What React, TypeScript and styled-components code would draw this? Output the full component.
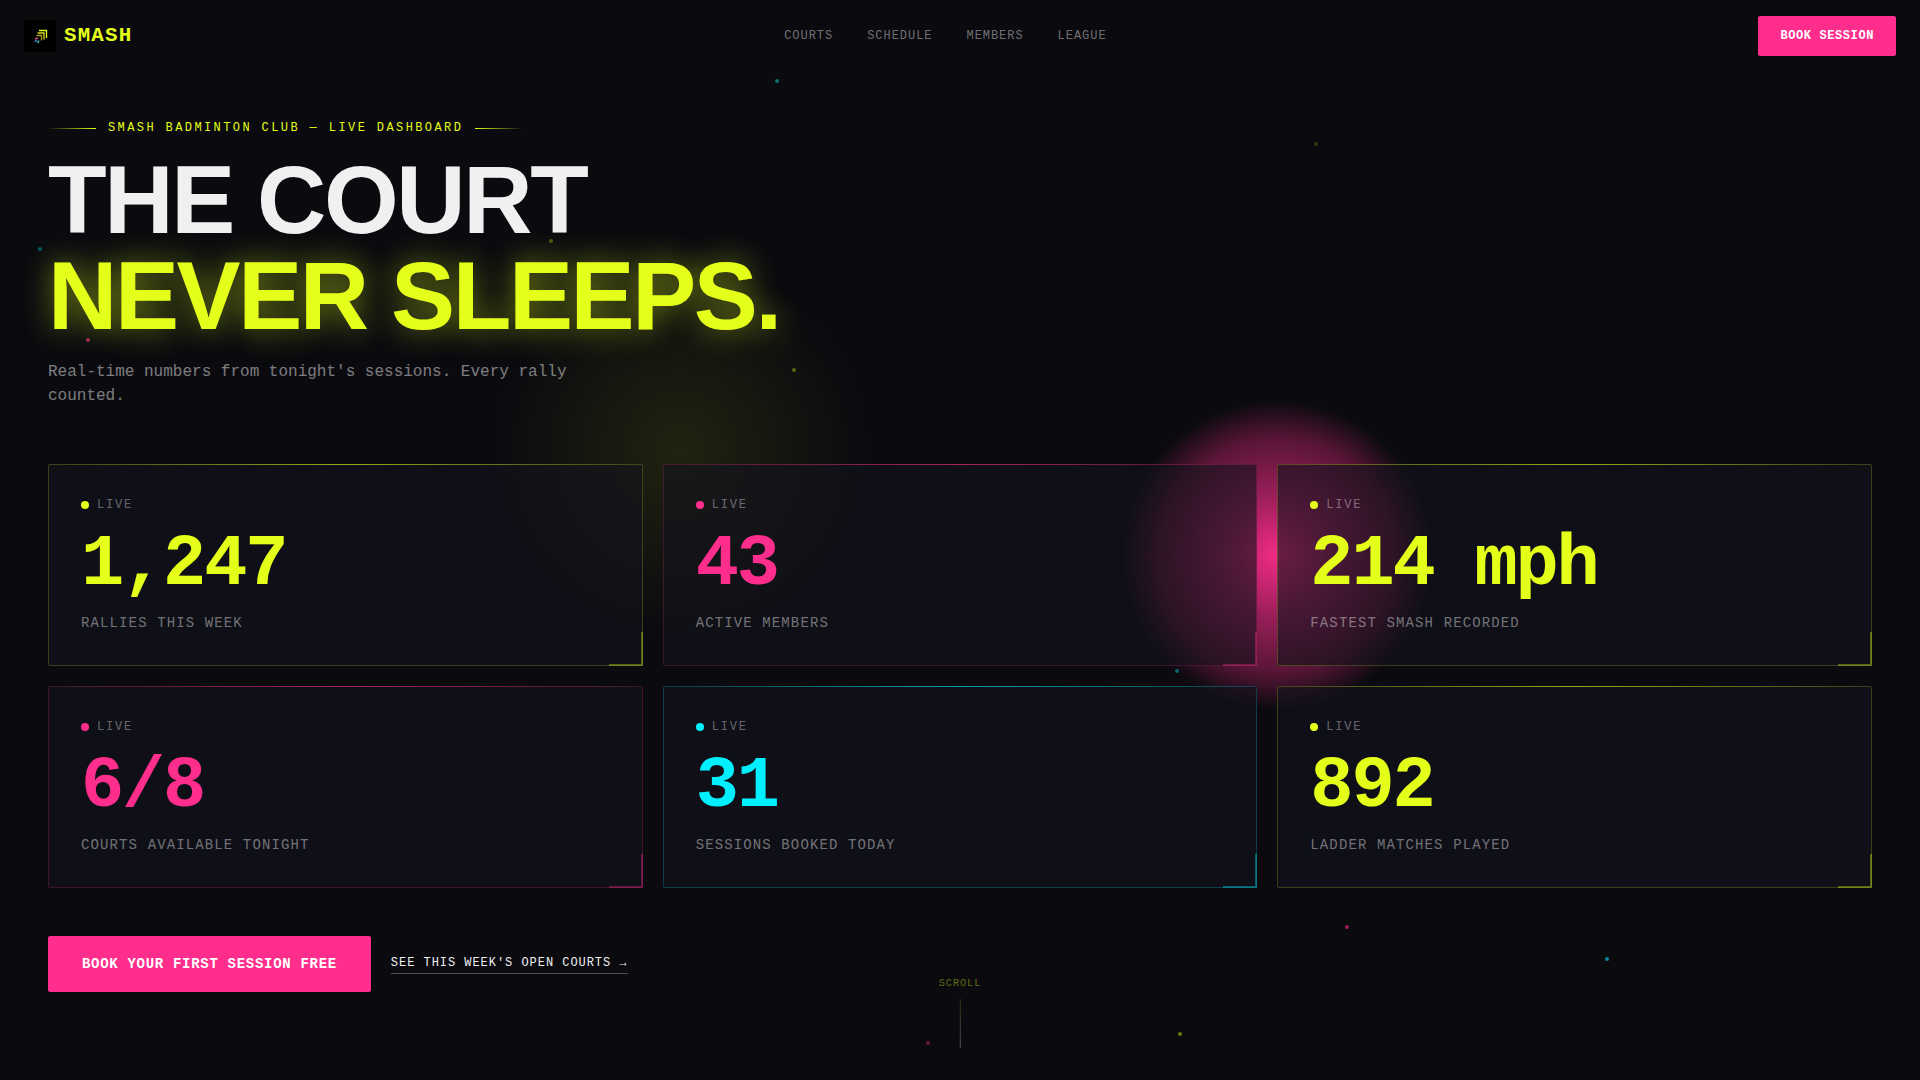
import styled, { createGlobalStyle } from "styled-components";

const LIME = "#e4ff1a";
const PINK = "#ff2d8c";
const CYAN = "#00f0ff";

const stats = [
  { value: "1,247", label: "RALLIES THIS WEEK", color: LIME, rgb: "228, 255, 26" },
  { value: "43", label: "ACTIVE MEMBERS", color: PINK, rgb: "255, 45, 140" },
  { value: "214 mph", label: "FASTEST SMASH RECORDED", color: LIME, rgb: "228, 255, 26" },
  { value: "6/8", label: "COURTS AVAILABLE TONIGHT", color: PINK, rgb: "255, 45, 140" },
  { value: "31", label: "SESSIONS BOOKED TODAY", color: CYAN, rgb: "0, 240, 255" },
  { value: "892", label: "LADDER MATCHES PLAYED", color: LIME, rgb: "228, 255, 26" },
];

const specks = [
  { x: 777, y: 81, color: CYAN, opacity: 0.45 },
  { x: 1316, y: 144, color: LIME, opacity: 0.2 },
  { x: 40, y: 249, color: CYAN, opacity: 0.35 },
  { x: 551, y: 241, color: LIME, opacity: 0.3 },
  { x: 88, y: 340, color: PINK, opacity: 0.6 },
  { x: 794, y: 370, color: LIME, opacity: 0.35 },
  { x: 1177, y: 671, color: CYAN, opacity: 0.4 },
  { x: 1347, y: 927, color: PINK, opacity: 0.6 },
  { x: 1607, y: 959, color: CYAN, opacity: 0.55 },
  { x: 1180, y: 1034, color: LIME, opacity: 0.45 },
  { x: 928, y: 1043, color: PINK, opacity: 0.4 },
];

const App = () => {
  return (
    <Page>
      <GlobalStyle />
      <PinkGlow />
      <LimeGlow />
      {specks.map((speck, index) => (
        <Speck key={index} $color={speck.color} style={{ left: speck.x, top: speck.y, opacity: speck.opacity }} />
      ))}

      <Nav>
        <Brand>
          <LogoBox>
            <svg width="32" height="32" viewBox="0 0 32 32" fill="none">
              <path d="M15 10.5h7.5v7.5" stroke={LIME} strokeWidth="1.3" />
              <path d="M13.5 13h6.5v6.5" stroke="#d8d820" strokeWidth="1.3" />
              <path d="M12.5 15.5h5v5" stroke="#a8a020" strokeWidth="1.3" />
              <path d="M11 19l3-1" stroke="#d0508c" strokeWidth="1.5" />
              <path d="M10.5 21.5l2.5-1" stroke="#3a7fd0" strokeWidth="1.5" />
              <path d="M13.5 23l1.5-2.5" stroke="#3fb08a" strokeWidth="1.5" />
            </svg>
          </LogoBox>
          <BrandName>SMASH</BrandName>
        </Brand>
        <NavLinks>
          <NavLink>COURTS</NavLink>
          <NavLink>SCHEDULE</NavLink>
          <NavLink>MEMBERS</NavLink>
          <NavLink>LEAGUE</NavLink>
        </NavLinks>
        <NavButton>BOOK SESSION</NavButton>
      </Nav>

      <Hero>
        <Eyebrow>SMASH BADMINTON CLUB — LIVE DASHBOARD</Eyebrow>
        <Headline>
          THE COURT
          <Accent>NEVER SLEEPS.</Accent>
        </Headline>
        <Intro>Real-time numbers from tonight's sessions. Every rally counted.</Intro>

        <StatGrid>
          {stats.map((stat) => (
            <StatCard key={stat.label} $rgb={stat.rgb}>
              <LiveTag>
                <LiveDot $color={stat.color} />
                LIVE
              </LiveTag>
              <StatValue $color={stat.color}>{stat.value}</StatValue>
              <StatLabel>{stat.label}</StatLabel>
            </StatCard>
          ))}
        </StatGrid>

        <Actions>
          <PrimaryButton>BOOK YOUR FIRST SESSION FREE</PrimaryButton>
          <TextLink>SEE THIS WEEK'S OPEN COURTS →</TextLink>
        </Actions>
      </Hero>

      <ScrollHint>
        SCROLL
        <ScrollLine />
      </ScrollHint>
    </Page>
  );
};

const GlobalStyle = createGlobalStyle`
  * {
    box-sizing: border-box;
  }

  body {
    margin: 0;
    background: #0a0a0f;
    font-family: "Liberation Mono", monospace;
  }
`;

const Page = styled.div`
  position: relative;
  height: 1080px;
  overflow: hidden;
  background: #0a0a0f;
`;

const PinkGlow = styled.div`
  position: absolute;
  left: 1122px;
  top: 400px;
  width: 310px;
  height: 310px;
  border-radius: 50%;
  background: radial-gradient(
    circle closest-side,
    rgba(255, 45, 140, 0.95) 0%,
    rgba(255, 45, 140, 0.58) 40%,
    rgba(255, 45, 140, 0.32) 75%,
    transparent 100%
  );
`;

const LimeGlow = styled.div`
  position: absolute;
  left: 490px;
  top: 260px;
  width: 380px;
  height: 380px;
  border-radius: 50%;
  background: radial-gradient(circle closest-side, rgba(228, 255, 26, 0.1), transparent 100%);
`;

const Speck = styled.div<{ $color: string }>`
  position: absolute;
  width: 4px;
  height: 4px;
  border-radius: 50%;
  background: ${({ $color }) => $color};
  transform: translate(-50%, -50%);
`;

const Nav = styled.nav`
  position: relative;
  display: flex;
  align-items: center;
  justify-content: space-between;
  padding: 16px 24px;
`;

const Brand = styled.div`
  display: flex;
  align-items: center;
  gap: 8px;
`;

const LogoBox = styled.div`
  width: 32px;
  height: 32px;
  background: #000;
`;

const BrandName = styled.span`
  margin-top: -2px;
  color: ${LIME};
  font-size: 20.8px;
  font-weight: 700;
  letter-spacing: 1.2px;
`;

const NavLinks = styled.div`
  display: flex;
  gap: 34px;
`;

const NavLink = styled.a`
  color: rgba(240, 240, 240, 0.45);
  font-size: 12px;
  letter-spacing: 0.08em;
`;

const NavButton = styled.button`
  padding: 0 22px;
  height: 40px;
  border: none;
  border-radius: 2px;
  background: ${PINK};
  color: #fff;
  font-family: inherit;
  font-size: 12px;
  font-weight: 700;
  letter-spacing: 0.05em;
`;

const Hero = styled.main`
  position: relative;
  padding: 47px 48px 0;
`;

const Eyebrow = styled.div`
  display: flex;
  align-items: center;
  gap: 12px;
  height: 18px;
  color: ${LIME};
  font-size: 12px;
  letter-spacing: 0.2em;

  &::before,
  &::after {
    content: "";
    width: 48px;
    height: 1px;
  }

  &::before {
    background: linear-gradient(90deg, transparent, ${LIME});
  }

  &::after {
    background: linear-gradient(90deg, ${LIME}, transparent);
  }
`;

const Headline = styled.h1`
  margin: 15px 0 0;
  color: #f0f0f0;
  font-family: "Liberation Sans", Arial, sans-serif;
  font-size: 96px;
  font-weight: 700;
  line-height: 96px;
  letter-spacing: -0.025em;
`;

const Accent = styled.span`
  display: block;
  color: ${LIME};
  text-shadow: 0 0 30px rgba(228, 255, 26, 0.5);
`;

const Intro = styled.p`
  margin: 16px 0 0;
  max-width: 540px;
  color: rgba(240, 240, 240, 0.5);
  font-size: 16px;
  line-height: 24px;
`;

const StatGrid = styled.section`
  display: grid;
  grid-template-columns: repeat(3, 1fr);
  gap: 20px;
  margin-top: 56px;
`;

const StatCard = styled.article<{ $rgb: string }>`
  position: relative;
  height: 202px;
  padding: 32px;
  border: 1px solid rgba(${({ $rgb }) => $rgb}, 0.2);
  border-radius: 2px;
  background: rgba(19, 20, 29, 0.62);

  &::before {
    content: "";
    position: absolute;
    top: -1px;
    left: -1px;
    right: -1px;
    height: 1px;
    background: linear-gradient(90deg, transparent, rgba(${({ $rgb }) => $rgb}, 0.55), transparent);
  }

  &::after {
    content: "";
    position: absolute;
    right: -1px;
    bottom: -1px;
    width: 32px;
    height: 32px;
    border-right: 2px solid rgba(${({ $rgb }) => $rgb}, 0.35);
    border-bottom: 2px solid rgba(${({ $rgb }) => $rgb}, 0.35);
  }
`;

const LiveTag = styled.div`
  display: flex;
  align-items: center;
  gap: 8px;
  color: rgba(240, 240, 240, 0.4);
  font-size: 12px;
  line-height: 16px;
  letter-spacing: 0.15em;
`;

const LiveDot = styled.span<{ $color: string }>`
  width: 8px;
  height: 8px;
  border-radius: 50%;
  background: ${({ $color }) => $color};
`;

const StatValue = styled.div<{ $color: string }>`
  margin-top: 16px;
  color: ${({ $color }) => $color};
  font-size: 72px;
  font-weight: 700;
  line-height: 72px;
  letter-spacing: -0.03em;
`;

const StatLabel = styled.div`
  margin-top: 14px;
  color: rgba(240, 240, 240, 0.45);
  font-size: 14px;
  line-height: 16px;
  letter-spacing: 0.08em;
`;

const Actions = styled.div`
  display: flex;
  align-items: center;
  gap: 20px;
  margin-top: 48px;
`;

const PrimaryButton = styled.button`
  height: 56px;
  padding: 0 34px;
  border: none;
  border-radius: 2px;
  background: ${PINK};
  color: #fff;
  font-family: inherit;
  font-size: 14px;
  font-weight: 700;
  letter-spacing: 0.05em;
`;

const TextLink = styled.a`
  padding-bottom: 1px;
  border-bottom: 1px solid rgba(240, 240, 240, 0.3);
  color: #f0f0f0;
  font-size: 12px;
  line-height: 18px;
  letter-spacing: 0.08em;
`;

const ScrollHint = styled.div`
  position: absolute;
  left: 50%;
  top: 977px;
  display: flex;
  flex-direction: column;
  align-items: center;
  gap: 10px;
  transform: translateX(-50%);
  color: rgba(228, 255, 26, 0.4);
  font-size: 10.4px;
  letter-spacing: 0.08em;
`;

const ScrollLine = styled.span`
  width: 1px;
  height: 49px;
  background: linear-gradient(180deg, rgba(228, 255, 26, 0.15), rgba(240, 240, 240, 0.3));
`;

export default App;
